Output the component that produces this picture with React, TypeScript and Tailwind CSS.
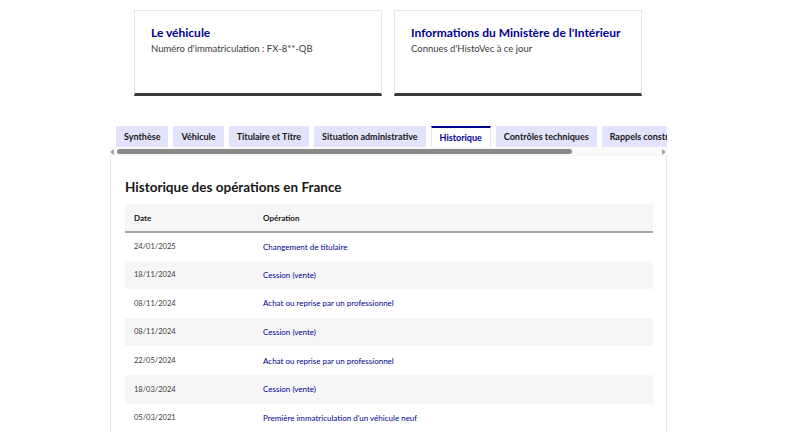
import React from 'react';

const rows = [
  { date: '24/01/2025', op: 'Changement de titulaire' },
  { date: '18/11/2024', op: 'Cession (vente)' },
  { date: '08/11/2024', op: 'Achat ou reprise par un professionnel' },
  { date: '08/11/2024', op: 'Cession (vente)' },
  { date: '22/05/2024', op: 'Achat ou reprise par un professionnel' },
  { date: '18/03/2024', op: 'Cession (vente)' },
  { date: '05/03/2021', op: "Première immatriculation d'un véhicule neuf" },
];

const tabs = [
  'Synthèse',
  'Véhicule',
  'Titulaire et Titre',
  'Situation administrative',
  'Historique',
  'Contrôles techniques',
  'Rappels constructeur',
];

const InfoCard: React.FC<{ title: string; text: string }> = ({ title, text }) => (
  <div className="w-[248px] h-[86px] border border-[#e5e5e5] border-b-[3px] border-b-[#3a3a3a] px-[16px] pt-[15px]">
    <h3 className="text-[12px] leading-[14px] font-bold text-[#000091] whitespace-nowrap">{title}</h3>
    <p className="mt-[3px] text-[9.5px] leading-[12px] text-[#3a3a3a]">{text}</p>
  </div>
);

export default function App() {
  return (
    <div
      className="w-[800px] h-[432px] overflow-hidden bg-white text-[#161616]"
      style={{ fontFamily: 'Lato, "Noto Sans", sans-serif' }}
    >
      {/* Cards */}
      <div className="flex gap-[12px] ml-[134px] pt-[10px]">
        <InfoCard title="Le véhicule" text="Numéro d'immatriculation : FX-8**-QB" />
        <InfoCard title="Informations du Ministère de l'Intérieur" text="Connues d'HistoVec à ce jour" />
      </div>

      {/* Tabs + panel */}
      <div className="ml-[110px] w-[557px] mt-[30px]">
        <div className="overflow-hidden pl-[6px] w-[557px]">
          <ul className="flex gap-[5px] whitespace-nowrap">
            {tabs.map((t) =>
              t === 'Historique' ? (
                <li
                  key={t}
                  className="h-[21px] px-[8px] flex items-center shrink-0 bg-white border-t-2 border-[#000091] border-x border-x-[#e5e5e5] text-[9px] font-bold text-[#000091]"
                >
                  {t}
                </li>
              ) : (
                <li
                  key={t}
                  className="h-[21px] px-[8px] flex items-center bg-[#e3e3fd] text-[9px] font-bold text-[#161616] shrink-0"
                >
                  {t}
                </li>
              )
            )}
          </ul>
        </div>

        {/* fake scrollbar */}
        <div className="h-[9px] flex items-center bg-[#f9f9f9]">
          <span className="w-0 h-0 border-y-[3px] border-y-transparent border-r-[4px] border-r-[#a3a3a3]" />
          <div className="ml-[3px] w-[455px] h-[5px] rounded-full bg-[#8a8a8a]" />
          <span className="ml-auto w-0 h-0 border-y-[3px] border-y-transparent border-l-[4px] border-l-[#a3a3a3] mr-[1px]" />
        </div>

        <div className="border-x border-[#e5e5e5] px-[14px] pt-[22px] h-[300px]">
          <h2 className="text-[13.5px] leading-[18px] font-bold text-[#161616]">
            Historique des opérations en France
          </h2>
          <table className="mt-[8px] w-[528px] text-[8px] border-collapse">
            <thead>
              <tr className="bg-[#f6f6f6] border-b-2 border-[#a6a6a6]">
                <th className="h-[28px] w-[138px] pl-[9px] text-left font-bold">Date</th>
                <th className="text-left font-bold">Opération</th>
              </tr>
            </thead>
            <tbody>
              {rows.map((r, i) => (
                <tr key={i} className={i % 2 === 1 ? 'bg-[#f6f6f6]' : 'bg-white'}>
                  <td className="h-[28.6px] pl-[9px] text-[7.5px] text-[#3a3a3a]">{r.date}</td>
                  <td className="text-[#000091]">{r.op}</td>
                </tr>
              ))}
            </tbody>
          </table>
        </div>
      </div>
    </div>
  );
}
